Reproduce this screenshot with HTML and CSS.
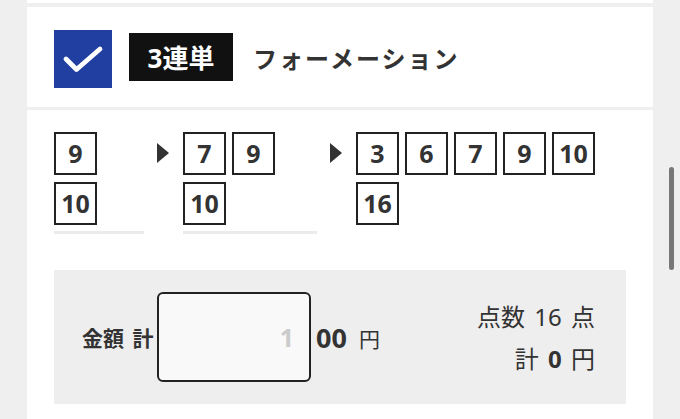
FILE: index.html
```html
<!DOCTYPE html>
<html lang="ja">
<head>
<meta charset="utf-8">
<link rel="stylesheet" href="styles.css">
</head>
<body>
<div class="page">
  <div class="side"></div>
  <main class="main">
    <div class="prev-card"></div>
    <section class="header">
      <span class="check">
        <svg width="58" height="58" viewBox="0 0 58 58"><path d="M12 29 L22.5 39.5 L46 19" fill="none" stroke="#fff" stroke-width="4.8" stroke-linecap="round" stroke-linejoin="round"/></svg>
      </span>
      <span class="tag">3連単</span>
      <span class="kind">フォーメーション</span>
    </section>
    <section class="body">
      <div class="picks">
        <div class="col col1">
          <div class="boxes"><span class="num">9</span><span class="num">10</span></div>
          <div class="line"></div>
        </div>
        <span class="arrow"></span>
        <div class="col col2">
          <div class="boxes"><span class="num">7</span><span class="num">9</span><span class="num">10</span></div>
          <div class="line"></div>
        </div>
        <span class="arrow"></span>
        <div class="col col3">
          <div class="boxes"><span class="num">3</span><span class="num">6</span><span class="num">7</span><span class="num">9</span><span class="num">10</span><span class="num">16</span></div>
        </div>
      </div>
      <div class="amount">
        <span class="amount-label">金額 計</span>
        <span class="input"><span class="input-val">1</span></span>
        <span class="zeros">00</span>
        <span class="yen">円</span>
        <div class="summary">
          <div>点数 16 点</div>
          <div>計 <b>0</b> 円</div>
        </div>
      </div>
    </section>
  </main>
  <div class="side right"></div>
</div>
<div class="scrollbar"></div>
</body>
</html>
```
FILE: styles.css
```css
* { box-sizing: border-box; }
html, body { margin: 0; padding: 0; }
body {
  background: #efefef;
  font-family: "Noto Sans", "Noto Sans CJK JP", sans-serif;
  color: #333;
  width: 680px;
  height: 419px;
  overflow: hidden;
}
.page { display: flex; height: 419px; }
.side { width: 27px; flex: none; background: #efefef; }
.main { width: 626px; flex: none; display: flex; flex-direction: column; background: #efefef; }
.prev-card { height: 3px; background: #fff; margin-bottom: 4px; }
.header {
  height: 100px;
  background: #fff;
  display: flex;
  align-items: center;
  padding-left: 27px;
  margin-bottom: 3px;
}
.check {
  width: 58px; height: 58px;
  background: #213fa0;
  display: block;
  margin-top: 4px;
}
.check svg { display: block; }
.tag {
  margin-left: 17px;
  width: 104px; height: 48px;
  background: #111;
  color: #fff;
  font-weight: 700;
  font-size: 26px;
  display: flex; align-items: center; justify-content: center;
}
.kind {
  margin-left: 20px;
  font-size: 24px;
  font-weight: 700;
  letter-spacing: 2px;
  color: #333;
}
.body {
  flex: 1;
  background: #fff;
  padding: 22px 27px 0 27px;
}
.picks { display: flex; align-items: flex-start; height: 138px; }
.col1 { width: 90px; }
.col2 { width: 134px; }
.col3 { width: 270px; }
.boxes { display: flex; flex-wrap: wrap; gap: 7px 6px; }
.num {
  width: 43px; height: 43px;
  border: 2px solid #222;
  display: flex; align-items: center; justify-content: center;
  font-weight: 700;
  font-size: 25px;
  color: #333;
  line-height: 1;
}
.line { height: 3px; background: #ebebeb; margin-top: 6px; }
.arrow {
  width: 0; height: 0;
  border-top: 10px solid transparent;
  border-bottom: 10px solid transparent;
  border-left: 12px solid #333;
  margin: 11px 14px 0 13px;
  flex: none;
}
.amount {
  height: 134px;
  background: #eeeeee;
  display: flex;
  align-items: center;
  padding: 0 31px 0 28px;
}
.amount-label { font-weight: 700; font-size: 21px; width: 75px; white-space: nowrap; word-spacing: 3px; }
.input {
  width: 154px; height: 90px;
  border: 2px solid #222;
  border-radius: 6px;
  background: #f9f9f9;
  display: flex; align-items: center; justify-content: flex-end;
  padding-right: 15px;
}
.input-val { font-size: 25px; font-weight: 700; color: #cbcbcb; }
.zeros { font-size: 27px; font-weight: 700; margin-left: 5px; }
.yen { font-size: 21px; margin-left: 12px; margin-top: 2px; }
.summary {
  margin-left: auto;
  text-align: right;
  font-size: 24px;
  line-height: 42px;
  margin-top: 2px;
  word-spacing: 3px;
}
.summary b { font-weight: 700; }
.scrollbar {
  position: absolute;
  left: 669px; top: 167px;
  width: 5px; height: 103px;
  background: #777;
  border-radius: 3px;
}
```
